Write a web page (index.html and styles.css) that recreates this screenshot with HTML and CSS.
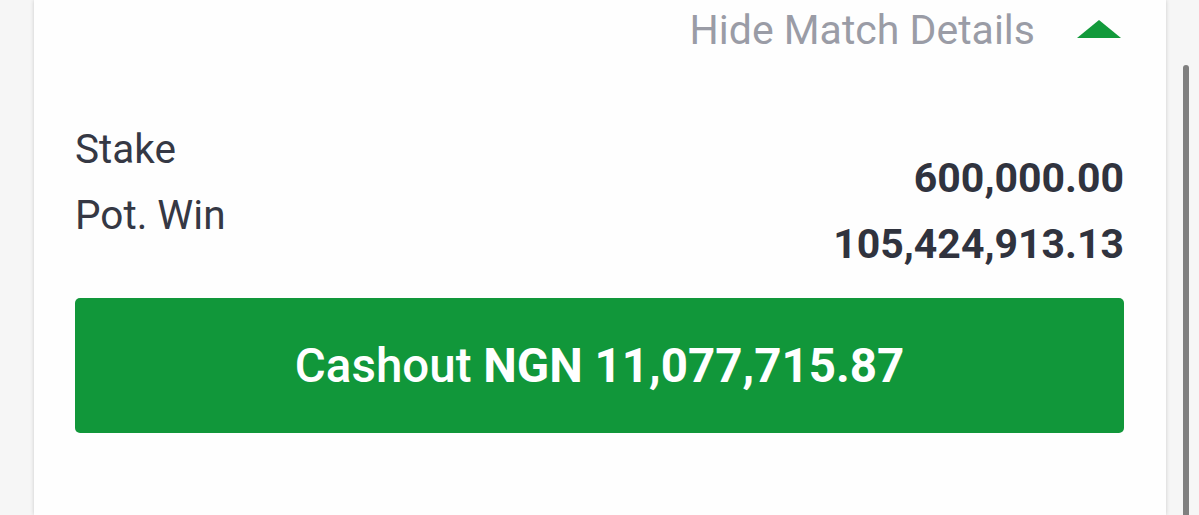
FILE: index.html
```html
<!DOCTYPE html>
<html lang="en">
<head>
    <meta charset="UTF-8">
    <meta name="viewport" content="width=device-width, initial-scale=1.0">
    <title>Cashout</title>
    <link rel="stylesheet" href="styles.css">
</head>
<body>
    <div class="page">
        <div class="gutter"></div>
        <div class="card">
            <div class="details-toggle">
                <span>Hide Match Details</span>
                <svg class="arrow" width="44" height="18" viewBox="0 0 44 18">
                    <polygon points="22,0 44,18 0,18" fill="#129a3b" />
                </svg>
            </div>
            <div class="summary">
                <div class="labels">
                    <div>Stake</div>
                    <div>Pot. Win</div>
                </div>
                <div class="values">
                    <div>600,000.00</div>
                    <div>105,424,913.13</div>
                </div>
            </div>
            <button class="cashout">Cashout <b>NGN 11,077,715.87</b></button>
        </div>
        <div class="gutter right">
            <div class="thumb"></div>
        </div>
    </div>
</body>
</html>
```

FILE: styles.css
```css
body {
    margin: 0;
    background-color: #f6f6f6;
    font-family: Roboto, "Liberation Sans", sans-serif;
    overflow: hidden;
}

.page {
    display: flex;
    height: 515px;
}

.gutter {
    width: 34px;
    flex-shrink: 0;
}

.gutter.right {
    width: 33px;
    display: flex;
    justify-content: flex-start;
}

.thumb {
    width: 6px;
    margin-left: 17px;
    margin-top: 65px;
    background-color: #808080;
    border-radius: 3px 3px 0 0;
}

.card {
    width: 1132px;
    flex-shrink: 0;
    background-color: #fefefe;
    box-shadow: 0 0 4px rgba(0, 0, 0, 0.18);
    padding: 0 42px 0 41px;
    box-sizing: border-box;
}

.details-toggle {
    display: flex;
    justify-content: flex-end;
    align-items: center;
    gap: 42px;
    padding: 6px 3px 0 0;
    font-size: 41px;
    line-height: 48px;
    color: #9a9ca6;
}

.arrow {
    margin-top: -3px;
}

.summary {
    display: flex;
    justify-content: space-between;
    margin-top: 62px;
    font-size: 40.5px;
    line-height: 66px;
    color: #353844;
}

.values {
    padding-top: 29px;
    font-size: 41px;
    font-weight: 700;
    text-align: right;
    color: #30333e;
}

.cashout {
    display: block;
    width: 100%;
    height: 135px;
    margin-top: 21px;
    border: none;
    border-radius: 5px;
    background-color: #11973a;
    color: #ffffff;
    font-family: Roboto, "Liberation Sans", sans-serif;
    font-size: 47.5px;
    font-weight: 500;
}

.cashout b {
    font-weight: 700;
}
```
